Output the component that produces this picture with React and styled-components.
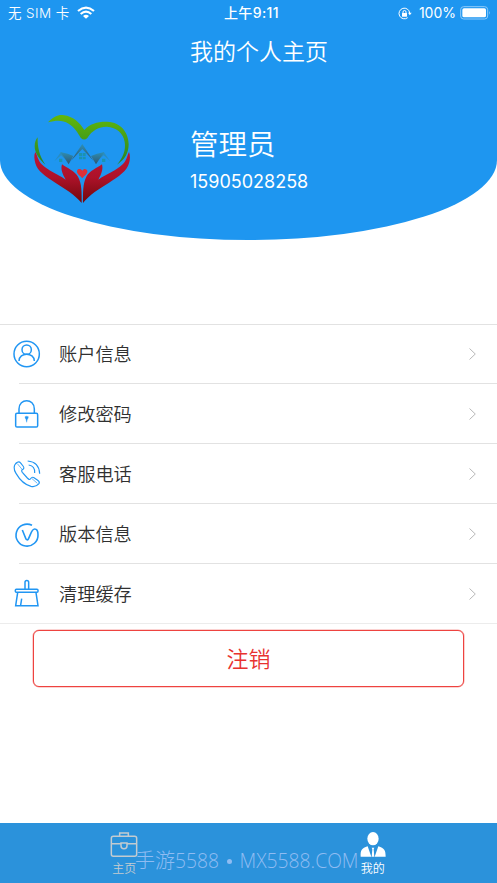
import React from "react";
import styled, { createGlobalStyle } from "styled-components";

const GlobalStyle = createGlobalStyle`
  * {
    box-sizing: border-box;
  }
  body {
    margin: 0;
    background: #fff;
    font-family: Inter, "Noto Sans CJK SC", sans-serif;
  }
`;

const Page = styled.div`
  display: flex;
  flex-direction: column;
  width: 497px;
  height: 883px;
  overflow: hidden;
`;

const Header = styled.header`
  flex: none;
  height: 240px;
  color: #fff;
  background: #1e96f0;
  border-radius: 0 0 50% 50% / 0 0 80px 80px;
`;

const StatusBar = styled.div`
  display: grid;
  grid-template-columns: 1fr auto 1fr;
  align-items: center;
  height: 26px;
  padding: 0 6px 0 8px;
  font-size: 14px;
  line-height: 26px;
`;

const Carrier = styled.div`
  display: flex;
  align-items: center;
  gap: 7px;
  font-size: 13.5px;
  font-weight: 350;
  letter-spacing: 0.4px;
`;

const Clock = styled.div`
  padding-left: 4px;
  font-size: 14px;
  font-weight: 550;
  letter-spacing: 0.4px;
`;

const Battery = styled.div`
  display: flex;
  align-items: center;
  justify-content: flex-end;

  span {
    margin: 0 4px 0 7px;
  }
`;

const Title = styled.h1`
  margin: 0;
  padding: 1px 0 0 190px;
  height: 50px;
  font-size: 23px;
  font-weight: 350;
  line-height: 50px;
`;

const Profile = styled.div`
  display: flex;
  padding: 24px 0 0 20px;
`;

const Person = styled.div`
  padding: 24px 0 0 40px;
`;

const Name = styled.div`
  font-size: 28.5px;
  font-weight: 350;
  line-height: 42px;
`;

const Phone = styled.div`
  margin-top: 3px;
  font-size: 18px;
  font-weight: 370;
  line-height: 26px;
`;

const Menu = styled.ul`
  flex: none;
  margin: 84px 0 0;
  padding: 0;
  list-style: none;
  border-top: 1px solid #e2e2e2;
  border-bottom: 1px solid #ececec;
`;

const MenuItem = styled.li`
  display: flex;
  align-items: center;
  height: 60px;
  padding: 0 21px 0 12px;
  background: linear-gradient(#e2e2e2, #e2e2e2) 19px 100% / 100% 1px no-repeat;

  &:first-child {
    height: 59px;
    padding-bottom: 1px;
  }
  &:last-child {
    height: 59px;
    background: none;
  }
`;

const Label = styled.span`
  flex: 1;
  margin-left: 17px;
  font-size: 18.2px;
  font-weight: 350;
  line-height: 30px;
  color: #303030;
`;

const Logout = styled.button`
  flex: none;
  height: 57px;
  margin: 6px 33px 0;
  padding: 0;
  border: 1px solid #ee4340;
  border-radius: 6px;
  box-shadow: 0 0 0 0.5px #f7a5a3;
  background: #fff;
  color: #e8322f;
  font: 350 22px/52px Inter, "Noto Sans CJK SC", sans-serif;
`;

const TabBar = styled.nav`
  position: relative;
  display: flex;
  height: 60px;
  margin-top: auto;
  background: #2b92db;
`;

const Tab = styled.div`
  flex: 1;
  display: flex;
  flex-direction: column;
  align-items: center;
  padding-top: 8px;
  font-size: 12px;
  font-weight: 350;
  line-height: 18px;
  color: ${({ $active }) => ($active ? "#fff" : "#c3cbd0")};

  svg {
    margin-bottom: 2px;
  }
`;

const Watermark = styled.div`
  position: absolute;
  left: 135px;
  top: 22px;
  font: 300 19.3px/30px "Open Sans", "Noto Sans CJK SC", sans-serif;
  white-space: pre;
  color: #8fbcf2;

  span {
    font-family: "Noto Sans CJK SC", sans-serif;
    font-size: 20px;
  }
  i {
    display: inline-block;
    width: 5px;
    height: 5px;
    margin: 0 7.500px 4px 8px;
    border-radius: 50%;
    background: #8fbcf2;
  }
`;

const WifiIcon = () => (
  <svg width="18" height="14" viewBox="0 0 54 42" fill="none" stroke="#fff" strokeWidth="6.500">
    <path d="M3 15Q27 -5 51 15" />
    <path d="M11 24Q27 10 43 24" />
    <path d="M18 30Q27 22 36 30L27 38Z" fill="#fff" stroke="none" />
  </svg>
);

const RotationLockIcon = () => (
  <svg width="14" height="13" viewBox="0 0 42 39" fill="none" stroke="#fff" strokeWidth="3">
    <path d="M29 32A16 16 0 1 1 35 18" />
    <path d="M30 17H41L35.500 25Z" fill="#fff" stroke="none" />
    <rect x="12" y="18" width="15" height="11" rx="1" fill="#fff" stroke="none" />
    <path d="M15 19V15A4.500 4.500 0 0 1 24 15V19" />
  </svg>
);

const BatteryIcon = () => (
  <svg width="31" height="14" viewBox="0 0 93 42">
    <rect x="2" y="2" width="81" height="37" rx="9" fill="none" stroke="#8fcafa" strokeWidth="3" />
    <rect x="7" y="7" width="71" height="27" rx="5" fill="#fff" />
    <path d="M87 15Q92 20 87 26Z" fill="#8fcafa" />
  </svg>
);

const Logo = () => (
  <svg width="130" height="120" viewBox="0 0 390 360">
    <defs>
      <linearGradient id="leaf" gradientUnits="userSpaceOnUse" x1="0" y1="45" x2="0" y2="194">
        <stop offset="0" stopColor="#62b70a" />
        <stop offset="1" stopColor="#278326" />
      </linearGradient>
      <linearGradient id="palm" x1="0" y1="0" x2="0" y2="1">
        <stop offset="0" stopColor="#bd1537" />
        <stop offset="0.500" stopColor="#ad1229" />
        <stop offset="1" stopColor="#71080d" />
      </linearGradient>
      <linearGradient id="roof" x1="0" y1="0" x2="0" y2="1">
        <stop offset="0" stopColor="#2d8fb5" />
        <stop offset="1" stopColor="#2f5670" />
      </linearGradient>
    </defs>
    <path
      fill="url(#leaf)"
      d="M84 67C102 49 116 43 132 46C158 49 179 67 193 90C209 71 235 64 262 65C304 67 326 99 326 133C326 158 315 179 291 194C309 172 318 151 314 126C310 99 289 82 261 80C240 79 216 90 202 114Q192 124 182 113C173 98 164 82 146 71C126 59 108 61 84 67Z"
    />
    <path fill="url(#leaf)" d="M53 112C52 141 58 168 76 194C57 178 44 158 44 139C44 128 47 119 53 112Z" />
    <path fill="#2a8dc0" d="M103 184L123 156L136 178L123 166ZM271 184L251 156L238 178L251 166Z" />
    <path fill="url(#roof)" d="M121 156L143 161L160 168L146 193ZM253 156L231 161L213 168L228 193Z" />
    <path fill="url(#roof)" d="M153 182L187 132L220 182L187 147Z" />
    <path
      fill="#1b93b0"
      d="M177 159H186V168H177ZM188 159H197V168H188ZM177 170H186V178H177ZM188 170H197V178H188ZM117 176H127V186H117ZM246 176H256V186H246Z"
    />
    <path
      fill="url(#palm)"
      d="M46 156C52 164 53 181 65 193C84 212 113 222 137 239C128 223 121 208 126 193C142 205 163 212 174 230C186 251 185 280 185 309C164 284 135 267 107 249C77 230 52 213 46 190C43 177 41 166 46 156Z"
    />
    <path
      fill="url(#palm)"
      d="M327 156C322 164 321 181 308 193C289 212 259 222 235 239C244 223 250 208 246 193C230 205 209 212 199 230C188 251 189 280 189 309C209 284 237 267 266 249C296 230 321 213 327 190C331 177 331 166 327 156Z"
    />
    <path fill="#dd3038" d="M187 235C179 226 170 222 171 213C173 205 183 206 187 212C191 205 200 206 202 213C203 222 194 226 187 235Z" />
  </svg>
);

const AccountIcon = () => (
  <>
    <circle cx="44" cy="45" r="38" />
    <circle cx="44" cy="32" r="14" />
    <path d="M21 66C21 39 67 39 67 66" />
  </>
);

const LockIcon = () => (
  <>
    <rect x="11" y="43" width="66" height="41" rx="4" />
    <path d="M21 43V30C21 -3 67 -3 67 30V43" />
    <path d="M39 53Q44 50 49 53Q49 58 46 61L44 70L42 61Q39 58 39 53Z" fill="#2196f3" strokeWidth="1" />
  </>
);

const CallIcon = () => (
  <g strokeWidth="3.500">
    <path d="M16 10C3 18 5 32 12 43C23 62 38 77 57 82C67 84 76 80 81 74C83 71 81 67 77 64L66 56C62 53 58 56 55 60C53 63 50 61 46 57L31 40C28 36 28 34 33 31C37 28 36 25 33 21L25 11C22 7 19 8 16 10Z" />
    <path d="M16 14L31 32M59 58L76 73" strokeWidth="2" />
    <path d="M50 18C63 20 69 30 68 42" />
    <path d="M47 6C70 8 82 23 83 44" />
  </g>
);

const VersionIcon = () => (
  <path strokeWidth="4.800" d="M60 19A33 33 0 1 0 78 47C78 36 75 30 68 30C59 30 56 47 49 60Q46 65 42 60L31 33" />
);

const CleanIcon = () => (
  <>
    <path d="M39 31V10C39 3 50 3 50 10V31" />
    <rect x="10" y="31" width="68" height="9" rx="3" />
    <path d="M17 41L11 80H78L72 41" />
    <path d="M29 59L26 78" />
  </>
);

const Chevron = () => (
  <svg width="7" height="12" viewBox="0 0 7 12" fill="none" stroke="#b8b8b8">
    <path d="M0.500 0.500L6.300 6L0.500 11.500" />
  </svg>
);

const BriefcaseIcon = () => (
  <svg width="28" height="27" viewBox="0 0 84 81" fill="none" stroke="#c3cbd0" strokeWidth="4.500">
    <rect x="4" y="16" width="76" height="60" rx="6" />
    <path d="M29 16V6H55V16M4 38H33M51 38H80M33 36V44A9 9 0 0 0 51 44V36Z" />
  </svg>
);

const UserIcon = () => (
  <svg width="26" height="27" viewBox="0 0 78 81" fill="#fff">
    <ellipse cx="39" cy="23" rx="17" ry="20" />
    <path d="M23 46L34 77H2C1 58 5 52 23 46ZM55 46L44 77H77C77 58 73 52 55 46ZM35 50H43L41 55L43 77H35L37 55Z" />
  </svg>
);

const items = [
  { title: "账户信息", Icon: AccountIcon },
  { title: "修改密码", Icon: LockIcon },
  { title: "客服电话", Icon: CallIcon },
  { title: "版本信息", Icon: VersionIcon },
  { title: "清理缓存", Icon: CleanIcon },
];

const App = () => (
  <Page>
    <GlobalStyle />
    <Header>
      <StatusBar>
        <Carrier>
          无 SIM 卡
          <WifiIcon />
        </Carrier>
        <Clock>上午9:11</Clock>
        <Battery>
          <RotationLockIcon />
          <span>100%</span>
          <BatteryIcon />
        </Battery>
      </StatusBar>
      <Title>我的个人主页</Title>
      <Profile>
        <Logo />
        <Person>
          <Name>管理员</Name>
          <Phone>15905028258</Phone>
        </Person>
      </Profile>
    </Header>
    <Menu>
      {items.map(({ title, Icon }) => (
        <MenuItem key={title}>
          <svg width="30" height="30" viewBox="0 0 90 90" fill="none" stroke="#2196f3" strokeWidth="4.500">
            <Icon />
          </svg>
          <Label>{title}</Label>
          <Chevron />
        </MenuItem>
      ))}
    </Menu>
    <Logout>注销</Logout>
    <TabBar>
      <Tab>
        <BriefcaseIcon />
        主页
      </Tab>
      <Tab $active>
        <UserIcon />
        我的
      </Tab>
      <Watermark>
        <span>手游</span>5588<i />MX5588.COM
      </Watermark>
    </TabBar>
  </Page>
);

export default App;
